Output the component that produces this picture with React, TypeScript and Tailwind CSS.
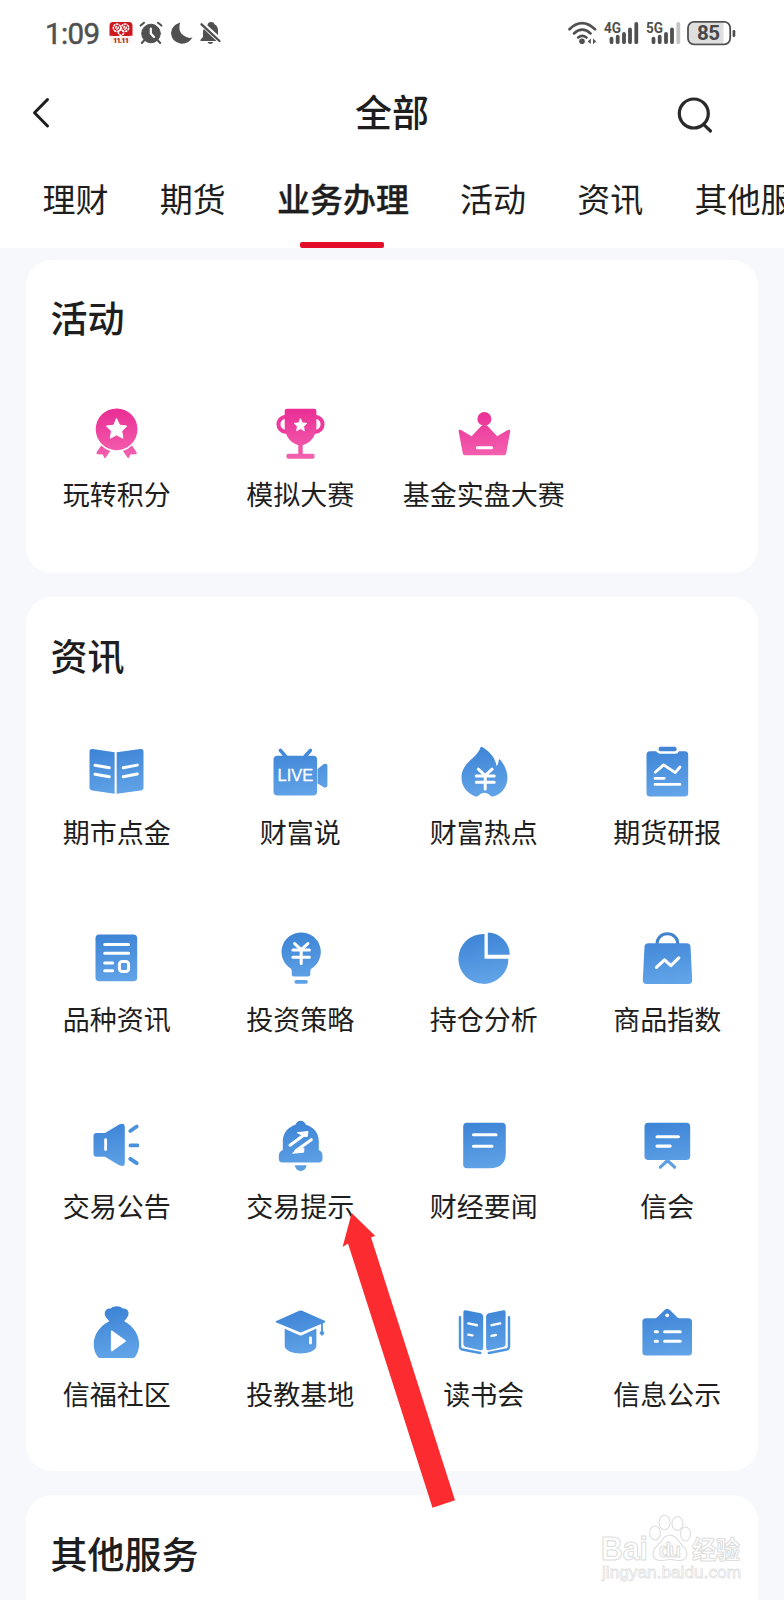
import type { ReactNode } from "react";

const BLUE = "url(#blue)";
const PINK = "url(#pink)";

function Icon({ children }: { children: ReactNode }) {
  return (
    <svg className="h-[60px] w-[60px]" viewBox="0 0 60 60" fill={BLUE} strokeLinecap="round" strokeLinejoin="round">
      {children}
    </svg>
  );
}

/* White detail strokes on top of a filled icon */
function Lines({ d, w = 3 }: { d: string; w?: number }) {
  return <path d={d} fill="none" stroke="#fff" strokeWidth={w} />;
}

const star = "M0-10.5L3.1-4.1 10.2-3.2 5.1 1.8 6.3 8.9 0 5.6-6.3 8.9-5.1 1.8-10.2-3.2-3.1-4.1Z";

const icons: Record<string, ReactNode> = {
  medal: (
    <g fill={PINK}>
      <circle cx="29.6" cy="25.3" r="20.9" />
      <path d={star} transform="translate(29.6 25.3)" fill="#fff" stroke="#fff" strokeWidth="1" />
      <path d="M14.3 41.5Q18 45.5 23.3 47L18.6 53.8Q17.6 54.8 17 53.3L15.8 50.4 10.5 50.2Q8.8 49.8 9.6 48.3Z" />
      <path d="M44.9 41.5Q41.2 45.5 35.9 47L40.6 53.8Q41.6 54.8 42.2 53.3L43.4 50.4 48.7 50.2Q50.4 49.8 49.6 48.3Z" />
    </g>
  ),
  trophy: (
    <g fill={PINK}>
      <path d="M17.5 12.7H15.5A8 7.6 0 0 0 15.5 27.8H18M43.5 12.7H45.5A8 7.6 0 0 1 45.5 27.8H43" fill="none" stroke="#ee3a9c" strokeWidth="4" />
      <path d="M17 4.7H44Q46.4 4.7 46.4 7V23C46.4 33 38 41.3 30.5 41.3S14.7 33 14.7 23V7Q14.7 4.7 17 4.7Z" />
      <path d="M28.3 40H32.7V51H28.3Z" fill="#f055a9" />
      <rect x="16.4" y="49.8" width="28.2" height="4.9" rx="2" fill="#f060ae" />
      <path d={star} transform="translate(30.5 21.3) scale(.63)" fill="#fff" stroke="#fff" strokeWidth="1" />
    </g>
  ),
  crown: (
    <g fill={PINK}>
      <circle cx="30.4" cy="14.9" r="7" />
      <path d="M4.7 27.7C4.3 25.6 5.8 25.2 7.5 26.3L17.6 32.2 27 22.3Q30.4 19.8 33.8 22.3L43.2 32.2 53.3 26.3C55 25.2 56.5 25.6 56.1 27.7L52.2 49.5Q51.9 51.2 50.2 51.2H10.8Q9.1 51.2 8.8 49.5Z" />
      <Lines d="M23.4 43.7H37.5" w={3.1} />
    </g>
  ),
  book: (
    <g>
      <path d="M5.6 7.1L27.6 10.3V51.8L5.3 48.6Q2.5 48.2 2.5 45.5V9.7Q2.5 6.7 5.6 7.1Z" />
      <path d="M53.4 7.1L29.7 10.3V51.8L53.7 48.6Q56.5 48.2 56.5 45.5V9.7Q56.5 6.7 53.4 7.1Z" />
      <Lines d="M8 23.3L22.3 25.8M8 32.2L22.3 34.8M36.2 25.8L50.3 23.1M36.2 34.8L50.3 32" />
    </g>
  ),
  live: (
    <g>
      <path d="M10.4 8.4L15.7 14.5M40.4 8.4L35 14.5" stroke="#4289d9" strokeWidth="3.6" />
      <rect x="3.5" y="13.7" width="43.6" height="39.7" rx="4" />
      <path d="M47.6 27L53.8 22Q57.4 20.8 57.4 23.8V43.5Q57.4 46.3 53.8 45.2L47.6 41.5Z" />
      <text x="7.6" y="39.3" textLength="35.6" fontSize="16.4" fontFamily="Liberation Sans, sans-serif" fill="#fff" stroke="#fff" strokeWidth=".3">LIVE</text>
    </g>
  ),
  flame: (
    <g>
      <path d="M26.5 5.4C27 4.4 27.8 4.8 29 5.5C37 10.2 41.5 17 42.6 24.2C44.2 22.3 44.6 20 44.8 18C45 16.9 45.8 17.1 46.5 18C51.5 24.3 53.6 30.5 53.4 36.5C53 45.5 47.5 51.7 40 54.3C38 54.9 37.3 54.5 36.2 53.4C32.5 49.8 28.2 49.8 24.7 53.4C23.7 54.5 22.7 54.8 20.8 54.2C12.5 51 7.5 44 7.5 35.5C7.5 26.5 13.2 21 19 15.8C23 12.2 25.4 8.5 26.5 5.4Z" />
      <Lines d="M24.3 27.2L31.2 33.5 38.1 27.2M22.3 33.9H40.2M22.3 40.2H40.2M31.2 33.5V47" w={3} />
    </g>
  ),
  report: (
    <g>
      <rect x="9.5" y="9.2" width="41.7" height="45.4" rx="3.5" />
      <path d="M19.5 8V9.3Q20.3 11.7 22.8 11.7H38.8Q41.3 11.7 41.8 9.3V8Z" fill="#fff" />
      <rect x="21.6" y="4.8" width="18" height="4.5" rx="2" fill="#4385d5" />
      <Lines d="M18.2 30.2L26.6 22.9 38.2 30.7 43 25M18 36.4H27.2M18 42.4H43" w={2.8} />
    </g>
  ),
  doc: (
    <g>
      <rect x="8.5" y="5.5" width="41.7" height="46.8" rx="3.8" />
      <Lines d="M17.7 15.5H41.6M17.7 24.2H41.6M17.7 33.9H25.7M17.7 41.7H25.7" />
      <rect x="32.4" y="32.6" width="9.2" height="10" rx="2.8" fill="none" stroke="#fff" strokeWidth="3" />
    </g>
  ),
  bulb: (
    <g>
      <path d="M31.2 3.4A19.5 19.5 0 0 1 41.5 39.5Q40.3 40.5 40.3 42V45.5Q40.3 47.6 38.2 47.6H24Q21.8 47.6 21.8 45.5V42Q21.8 40.5 20.8 39.5A19.5 19.5 0 0 1 31.2 3.4Z" />
      <rect x="24.4" y="51" width="13.4" height="3.8" rx="1.8" fill="#5fa1e5" />
      <Lines d="M24.6 14.6L31.2 20.6 37.9 14.6M22.9 20.9H39.4M22.9 28.3H39.4M31.2 20.6V34.6" />
    </g>
  ),
  pie: (
    <g>
      <path d="M30.5 4.9V29.7H54.4A25 25 0 1 1 30.5 4.9Z" />
      <path d="M33.8 3.5A22.5 22.5 0 0 1 55.8 25.8H33.8Z" />
    </g>
  ),
  bag: (
    <g>
      <path d="M20 16.5V14.5A10.4 9.7 0 0 1 40.8 14.5V16.5" fill="none" stroke="#4182cd" strokeWidth="3" />
      <path d="M11.5 14.2H49.8Q53.3 14.2 53.5 17.7L55.2 51Q55.3 55 51.4 55H9.6Q5.7 55 5.8 51L7.5 17.7Q7.7 14.2 11.5 14.2Z" />
      <Lines d="M19.4 38.4L27.5 30.8 33.9 36.6 41.8 28.8" w={3.1} />
    </g>
  ),
  speaker: (
    <g>
      <path d="M9.5 16H18L32.2 7.6Q37.8 5.2 37.8 10.5V45.5Q37.8 50.7 32.2 48.3L18 39.7H9.5Q6.5 39.7 6.5 36.7V19Q6.5 16 9.5 16Z" />
      <Lines d="M18.6 22.7V32.5" w={2.8} />
      <path d="M43.3 14L49.7 9.5M43.5 28.4H50.4M43.3 41.8L49.7 46.2" stroke="#4c91dc" strokeWidth="3.9" />
    </g>
  ),
  bell: (
    <g>
      <path d="M25.5 7.7Q27 3.7 30.6 3.7T35.9 7.7C43.7 10 48.8 16.2 48.8 24V33Q52.5 34.5 52.5 39V41.8Q52.5 45.4 49 45.4H12.3Q8.8 45.4 8.8 41.8V39Q8.8 34.5 12.8 33V24C12.8 16.2 18 10 25.5 7.7Z" />
      <path d="M24.8 48.3H36.6Q35.5 54 30.7 54T24.8 48.3Z" fill="#5a9fe3" />
      <path d="M20 28.2L35 17.2M41.3 22.7L26 33.8" stroke="#fff" strokeWidth="3" />
      <path d="M27.6 15.6L38 14.6 37.2 19.6 34 19.2ZM23 36.2L33.6 35.2 34 31.2 28 31.6Z" fill="#fff" stroke="#fff" strokeWidth="1" />
    </g>
  ),
  note: (
    <g>
      <path d="M13 5.7H48Q51.8 5.7 51.8 9.5V36Q51.8 51.3 35.5 51.3H13Q9.2 51.3 9.2 47.5V9.5Q9.2 5.7 13 5.7Z" />
      <Lines d="M19.5 17.7H42M19.5 29.3H38" w={3.1} />
    </g>
  ),
  board: (
    <g>
      <rect x="7.5" y="5.7" width="45.7" height="37.4" rx="3.8" />
      <path d="M30.5 43.5L23.4 50.2M30.5 43.5L37.6 50.2" stroke="#5ea0e2" strokeWidth="3.2" />
      <Lines d="M20 19.8H41.4M20 29.1H33.2" w={3.1} />
    </g>
  ),
  sack: (
    <g>
      <path d="M22.3 17.2C19.3 14.2 17.5 11.6 17.7 9C17.9 5.8 20.8 4 23.7 4.6C26.5 1.4 33 1.4 35.7 4.6C38.5 4 41.5 5.8 41.6 9C41.7 11.6 40 14.2 37.2 17.2C46.5 22.2 52 30.5 52.1 40C52.1 45.5 50.6 49.5 48 53Q47.3 53.9 46 53.9H13Q11.6 53.9 10.9 53C8.2 49.5 6.7 45.5 6.7 40C6.8 30.5 12.6 22.2 22.3 17.2Z" />
      <path d="M24.8 27.4L38 36.9 24.8 46.4Z" fill="#fff" stroke="#fff" strokeWidth="1.8" />
    </g>
  ),
  cap: (
    <g>
      <path d="M14.7 24.8L29.4 31.2Q30.7 31.7 32 31.2L46.4 24.6V42C46.4 46.5 38.5 49.5 30.6 49.5S14.7 46.5 14.7 42Z" />
      <path d="M29.3 6.8Q30.7 6.2 32.1 6.8L54.7 16.8Q56 17.6 54.7 18.4L32.1 28Q30.7 28.6 29.3 28L6.3 18.5Q5 17.7 6.3 16.9Z" />
      <path d="M52 18.5V27.5" stroke="#4a8fdc" strokeWidth="1.8" />
      <path d="M52 25.5L54.6 29.2 52 32 49.3 29.2Z" />
      <Lines d="M40.5 33.8V39" w={2.8} />
    </g>
  ),
  pages: (
    <g>
      <path d="M11.5 6.3L26.7 9.3Q29.2 10 29.2 12.5V43.8Q29.2 46.8 26.3 46.2L11.8 43Q9.4 42.4 9.4 40V8Q9.4 5.9 11.5 6.3Z" />
      <path d="M49.5 6.3L34.6 9.3Q32.1 10 32.1 12.5V43.8Q32.1 46.8 35 46.2L49.2 43Q51.6 42.4 51.6 40V8Q51.6 5.9 49.5 6.3Z" />
      <path d="M6 13.3V42.5Q6 45 8.4 45.6L26.2 49M55 13.3V42.5Q55 45 52.6 45.6L34.9 49" fill="none" stroke="#4d94df" strokeWidth="2.5" />
      <Lines d="M14.3 19.4L23 21.2M14.3 30.6L18.5 31.4M37.6 21.2L46.2 19.4M37.6 31.9L41.8 31" w={2.4} />
    </g>
  ),
  notice: (
    <g>
      <path d="M9 14.2H18.3Q19.6 13.9 20.5 13L27.3 6.3Q30.2 3 33.2 6.3L40 13Q40.9 13.9 42.2 14.2H51.3Q55 14.2 55 17.8V48Q55 51.6 51.3 51.6H9Q5.4 51.6 5.4 48V17.8Q5.4 14.2 9 14.2Z" />
      <circle cx="30.2" cy="11.3" r="1.9" fill="#fff" />
      <Lines d="M18.2 27.8H20.4M27.6 27.8H43.2M18.2 37.2H20.4M27.6 37.2H43.2" w={3.1} />
    </g>
  ),
};

type Item = [icon: string, label: string];

const activities: Item[] = [["medal", "玩转积分"], ["trophy", "模拟大赛"], ["crown", "基金实盘大赛"]];

const news: Item[] = [
  ["book", "期市点金"], ["live", "财富说"], ["flame", "财富热点"], ["report", "期货研报"],
  ["doc", "品种资讯"], ["bulb", "投资策略"], ["pie", "持仓分析"], ["bag", "商品指数"],
  ["speaker", "交易公告"], ["bell", "交易提示"], ["note", "财经要闻"], ["board", "信会"],
  ["sack", "信福社区"], ["cap", "投教基地"], ["pages", "读书会"], ["notice", "信息公示"],
];

const tabs = ["理财", "期货", "业务办理", "活动", "资讯", "其他服务"];

function Card({ title, items, className }: { title: string; items: Item[]; className: string }) {
  return (
    <section className={`rounded-[26px] bg-white ${className}`}>
      <h2 className="mb-[62px] pl-[24.5px] text-[37px] leading-[50px] font-medium">{title}</h2>
      <div className="-mx-[1px] grid auto-rows-[187.4px] grid-cols-4">
        {items.map(([icon, label]) => (
          <div key={label} className="flex flex-col items-center">
            <Icon>{icons[icon]}</Icon>
            <span className="mt-[9.5px] text-[27px] leading-[40px] whitespace-nowrap">{label}</span>
          </div>
        ))}
      </div>
    </section>
  );
}

function Signal({ label, weak }: { label: string; weak?: boolean }) {
  return (
    <svg className="h-[24px] w-[36px]" viewBox="0 0 36 24" fill="none" strokeWidth="3.8" strokeLinecap="round">
      <text x="0" y="12" fontSize="14.5" fontFamily="Roboto, sans-serif" fontWeight="700" fill="#505050" textLength="17" lengthAdjust="spacingAndGlyphs">{label}</text>
      <path d="M7.5 17.7V21.2M13.7 15.7V21.2M20 13V21.2M26 8.3V21.2" stroke="#505050" />
      <path d="M32.3 3V21.2" stroke={weak ? "#c4c4c4" : "#505050"} />
    </svg>
  );
}

function StatusBar() {
  return (
    <div className="flex h-[66px] items-center pl-[45px] text-[#505050]">
      <span className="w-[64px] pt-[1px] font-[Roboto] text-[29.5px] leading-[30px] tracking-[-0.6px] [-webkit-text-stroke:0.5px_#505050]">1:09</span>
      <svg className="h-[24px] w-[24px]" viewBox="0 0 24 24">
        <path d="M4 1H20Q23.5 1 23.5 5V15H.5V5Q.5 1 4 1Z" fill="#cf1720" />
        <g fill="none" stroke="#fff" strokeWidth="1.5" strokeDasharray="2.6 .6">
          <circle cx="8" cy="6.8" r="3.7" /><circle cx="16" cy="6.8" r="3.7" /><circle cx="12" cy="11.7" r="2.6" />
          <circle cx="8" cy="6.8" r="1.3" /><circle cx="16" cy="6.8" r="1.3" />
        </g>
        <path d="M.5 14.5Q12 16.5 23.5 14.5L22 22H2Z" fill="#fdf1ee" />
        <text x="4" y="21.5" textLength="16" fontSize="7.5" fontWeight="900" fontFamily="Roboto, sans-serif" fill="#a52a24">11.11</text>
      </svg>
      <svg className="ml-[6px] h-[24px] w-[24px]" viewBox="0 0 24 24" fill="#505050" stroke="#505050" strokeLinecap="round">
        <circle cx="12" cy="12.5" r="9.3" />
        <path d="M1.6 4.6L5 1.8M22.4 4.6L19 1.8M5.5 19L2.8 22M18.5 19L21.2 22" strokeWidth="2" />
        <path d="M11.8 7.5V12.5L15 16" fill="none" stroke="#fff" strokeWidth="2.2" />
      </svg>
      <svg className="ml-[7px] h-[24px] w-[24px]" viewBox="0 0 24 24" fill="#505050">
        <path d="M10.2 1.4Q7.5 9.5 13 14T22.6 16.2Q18.5 23.2 11 22.7Q1.5 21 1 12Q1.3 4 10.2 1.4Z" />
      </svg>
      <svg className="ml-[5px] h-[24px] w-[24px]" viewBox="0 0 24 24" fill="#505050">
        <path d="M8.5 4Q9 1.2 12 1.1T15.5 3.2Q19 5 19 9.5V14L8.5 4.5ZM4.8 8L17.5 20H1.5Q1 18.5 2.6 17.5L4 16V10ZM8.5 21H14.2Q13.5 23 11.4 23T8.5 21Z" />
        <path d="M2.5 3.3L20.5 20" stroke="#505050" strokeWidth="2.3" strokeLinecap="round" />
      </svg>
      <svg className="ml-[344px] h-[24px] w-[32px]" viewBox="0 0 32 24" fill="none" stroke="#505050" strokeWidth="2.7" strokeLinecap="round">
        <path d="M2.5 8.2Q15 -3.8 28 8.2M7 12.4Q15.3 5 23.5 12.4M11.2 16.5Q15.3 13.4 19.4 16.5" />
        <circle cx="15" cy="20.2" r="2.8" fill="#505050" stroke="none" />
        <path d="M23.8 17.6V23L20.7 20.5ZM26 17.6V23L29.2 20.5Z" fill="#505050" stroke="none" />
      </svg>
      <div className="ml-[5px] flex gap-[5.5px]">
        <Signal label="4G" />
        <Signal label="5G" weak />
      </div>
      <svg className="ml-[4.5px] h-[26px] w-[50px]" viewBox="0 0 50 26">
        <rect x="2.2" y="2" width="42" height="22" rx="6" fill="#fff" />
        <path d="M8 3H37.5V23H8Q3 23 3 18V8Q3 3 8 3Z" fill="#dedede" />
        <rect x="2" y="1.9" width="42.2" height="22.4" rx="6" fill="none" stroke="#505050" strokeWidth="1.8" />
        <rect x="46.6" y="10" width="2.7" height="7" rx="1.2" fill="#505050" />
        <text x="11" y="20.3" textLength="23" fontSize="20.5" fontWeight="700" fontFamily="Roboto, sans-serif" fill="#484848">85</text>
      </svg>
    </div>
  );
}

function Watermark() {
  return (
    <svg className="absolute top-[1512px] left-[598px] h-[76px] w-[150px]" viewBox="0 0 150 76" fill="#fff" stroke="#dedede" strokeWidth="1.1">
      <text x="3" y="48" textLength="47" lengthAdjust="spacingAndGlyphs" fontSize="33" fontWeight="700" fontFamily="Liberation Sans, sans-serif">Bai</text>
      <ellipse cx="57" cy="21" rx="5.3" ry="7" />
      <ellipse cx="66.5" cy="10.5" rx="5.5" ry="7.2" />
      <ellipse cx="79.5" cy="11.5" rx="5.5" ry="7" />
      <ellipse cx="87.5" cy="22" rx="5" ry="7" />
      <path d="M72 23C78 23 80 29 85 34C91 40 90 48 82 48.5C77 48.5 76 47.5 72 47.5S67 48.5 62 48.5C54 48 53 40 59 34C64 29 66 23 72 23Z" />
      <text x="61" y="45" textLength="22" fontSize="20" fontWeight="700" fontFamily="Liberation Sans, sans-serif">du</text>
      <text x="94" y="46.5" textLength="48" lengthAdjust="spacingAndGlyphs" fontSize="25" fontWeight="700" fontFamily="Noto Sans CJK SC, sans-serif">经验</text>
      <text x="4" y="66" textLength="139" lengthAdjust="spacingAndGlyphs" fontSize="17" fontFamily="Liberation Sans, sans-serif" stroke="#e2e2e2" strokeWidth=".8">jingyan.baidu.com</text>
    </svg>
  );
}

export default function App() {
  return (
    <div className="relative h-[1600px] w-[784px] overflow-hidden bg-[#f6f8fc] font-['Noto_Sans_CJK_SC',sans-serif] text-[#1e1e1e]">
      <svg className="absolute h-0 w-0">
        <defs>
          <linearGradient id="blue" gradientUnits="userSpaceOnUse" x1="25" y1="4" x2="33" y2="56">
            <stop stopColor="#3d84d6" />
            <stop offset="1" stopColor="#63a5e8" />
          </linearGradient>
          <linearGradient id="pink" gradientUnits="userSpaceOnUse" x1="27" y1="4" x2="32" y2="56">
            <stop stopColor="#e92c94" />
            <stop offset="1" stopColor="#f464b1" />
          </linearGradient>
        </defs>
      </svg>

      <header className="h-[248px] bg-white">
        <StatusBar />
        <div className="flex h-[94px] items-center justify-between pr-[70px] pl-[30px]">
          <svg className="h-[40px] w-[44px]" viewBox="0 0 44 40" fill="none" stroke="#1e1e1e" strokeWidth="3" strokeLinecap="round" strokeLinejoin="round">
            <path d="M17.5 6.5L4.5 19.7 17.5 33" />
          </svg>
          <h1 className="pb-[5px] pl-[40px] text-[37px] leading-[50px] font-medium">全部</h1>
          <svg className="h-[44px] w-[44px]" viewBox="0 0 44 44" fill="none" stroke="#2a2a2a" strokeWidth="3.2" strokeLinecap="round">
            <circle cx="23.8" cy="22.5" r="14.5" />
            <path d="M34.6 34.3L40.5 40" />
          </svg>
        </div>
        <nav className="flex h-[88px] gap-[51.2px] pl-[42.5px] text-[33px] whitespace-nowrap">
          {tabs.map((tab) =>
            tab === "业务办理" ? (
              <div key={tab} className="flex shrink-0 flex-col items-center justify-between font-medium [-webkit-text-stroke:0.3px_#1e1e1e]">
                <span className="pt-[14px] leading-[48px]">{tab}</span>
                <span className="mr-[1px] h-[6px] w-[84px] rounded-[2px] bg-[#e30e2a]" />
              </div>
            ) : (
              <span key={tab} className="shrink-0 pt-[14px] leading-[48px]">{tab}</span>
            ),
          )}
        </nav>
      </header>

      <main className="flex flex-col gap-[24px] px-[26px] pt-[12px]">
        <Card title="活动" items={activities} className="h-[313px] pt-[32px]" />
        <Card title="资讯" items={news} className="h-[874px] pt-[33px]" />
        <Card title="其他服务" items={[]} className="h-[145px] pt-[33px]" />
      </main>

      <Watermark />
      <svg className="absolute top-[1210px] left-[338px] h-[300px] w-[120px]" viewBox="338 1210 120 300" fill="#fb2b2f">
        <path d="M351.7 1213L375.3 1236 371 1237.3 455 1500.3 432.5 1507.8 348 1243.5 342.6 1247Z" />
      </svg>
    </div>
  );
}
